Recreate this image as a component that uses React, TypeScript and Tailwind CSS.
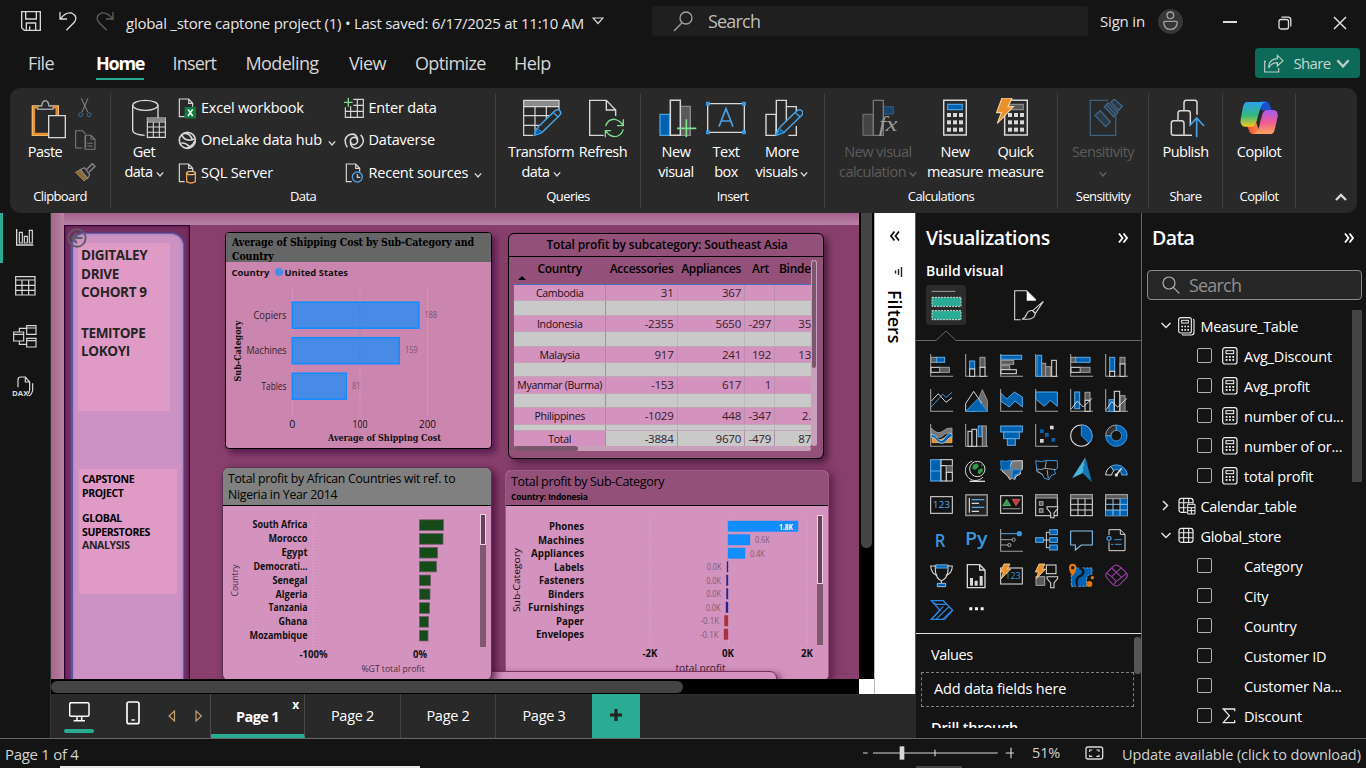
import React from 'react';

type Kids = { children?: React.ReactNode };

/* Icons are drawn on a grid of three units per pixel. */
function Ic({ w, h, children, className = '' }: Kids & { w: number; h: number; className?: string }) {
  return (
    <svg width={w} height={h} viewBox={`0 0 ${w * 3} ${h * 3}`} fill="none" className={`shrink-0 ${className}`}>
      {children}
    </svg>
  );
}

const kinds = {
  b: { fill: '#0063b1', stroke: '#5aa7e6' },
  g: { fill: '#5a5a5a', stroke: '#9c9c9c' },
  o: { fill: '#141414', stroke: '#d8d8d8' },
  n: { fill: 'none', stroke: '#d8d8d8' },
};
function R({ x, y, w, h, k }: { x: number; y: number; w: number; h: number; k: keyof typeof kinds }) {
  return <rect x={x} y={y} width={w} height={h} strokeWidth={3.2} {...kinds[k]} />;
}
const W = '#d8d8d8';
const B = '#3a96dd';
const G = '#a0a0a0';
const Axis = () => <path d="M2 0V67H69" stroke={G} strokeWidth={3.2} />;
const Bolt = () => <path d="M12 0H30L22 15H32L4 44L10 24H1Z" fill="#e8912d" stroke="#f8d49a" strokeWidth={2.5} />;
const Funnel = () => <path d="M36 38H68V44L57 57V71H47V57L36 44Z" fill="#141414" stroke={W} strokeWidth={3.2} />;

const visuals: React.ReactNode[] = [
  <><Axis /><R x={3} y={10} w={17} h={15} k="g" /><R x={20} y={10} w={24} h={15} k="b" /><R x={3} y={40} w={26} h={15} k="o" /><R x={29} y={40} w={29} h={15} k="g" /></>,
  <><Axis /><R x={14} y={21} w={15} h={24} k="b" /><R x={14} y={45} w={15} h={22} k="o" /><R x={45} y={10} w={15} h={30} k="g" /><R x={45} y={40} w={15} h={27} k="o" /></>,
  <><Axis /><R x={3} y={4} w={62} h={12} k="b" /><R x={3} y={19} w={38} h={12} k="g" /><R x={3} y={35} w={26} h={12} k="g" /><R x={3} y={47} w={46} h={12} k="o" /></>,
  <><Axis /><R x={6} y={4} w={14} h={63} k="b" /><R x={20} y={28} w={12} h={39} k="g" /><R x={32} y={38} w={14} h={29} k="g" /><R x={50} y={19} w={14} h={48} k="o" /></>,
  <><Axis /><R x={3} y={10} w={14} h={15} k="g" /><R x={17} y={10} w={43} h={15} k="b" /><R x={3} y={40} w={28} h={15} k="o" /><R x={31} y={40} w={29} h={15} k="g" /></>,
  <><Axis /><R x={14} y={10} w={15} h={42} k="b" /><R x={14} y={52} w={15} h={15} k="o" /><R x={45} y={10} w={15} h={20} k="g" /><R x={45} y={30} w={15} h={37} k="o" /></>,

  <><Axis /><path d="M4 54L38 16L48 25L66 10" stroke={B} strokeWidth={3} /><path d="M4 36L25 14L48 40L66 26" stroke={W} strokeWidth={3} /></>,
  <><path d="M52 2L67 34V67L38 36Z" fill="#6a6a6a" stroke={G} strokeWidth={2.5} /><path d="M2 67V44L26 7L50 42L34 67Z" fill="#141414" stroke={W} strokeWidth={3} /><path d="M2 67L38 30L67 67Z" fill="#0063b1" stroke={B} strokeWidth={3} /></>,
  <><path d="M2 12L20 30L43 9L67 24V54L45 36L28 54L2 36Z" fill="#0063b1" stroke="#5aa7e6" strokeWidth={3} /><Axis /></>,
  <><path d="M2 9H67V52L46 34L28 52L2 30Z" fill="#0063b1" stroke="#5aa7e6" strokeWidth={3} /><Axis /></>,
  <><Axis /><R x={14} y={9} w={15} h={50} k="b" /><R x={45} y={10} w={15} h={24} k="g" /><R x={45} y={34} w={15} h={33} k="o" /><path d="M4 60L22 36L40 54L66 28" stroke={W} strokeWidth={3} /></>,
  <><Axis /><R x={12} y={32} w={15} h={35} k="b" /><R x={28} y={7} w={16} h={60} k="o" /><R x={46} y={20} w={14} h={47} k="g" /><path d="M4 62L20 38L38 54L66 28" stroke={W} strokeWidth={3} /></>,

  <><path d="M6 34L24 50L42 42L66 34V56H6Z" fill="#e8912d" stroke="#f3c078" strokeWidth={2} /><path d="M4 12Q22 34 38 22Q50 10 66 12V28Q48 24 38 36Q22 48 4 28Z" fill="#777" stroke={G} strokeWidth={2.5} /><path d="M4 30Q16 32 24 44Q36 58 48 36Q54 28 66 28V38Q56 40 48 52Q36 64 22 52Q14 38 4 40Z" fill="#0063b1" stroke="#a9d4f5" strokeWidth={2.5} /><Axis /></>,
  <><Axis /><R x={9} y={22} w={12} h={45} k="o" /><R x={21} y={16} w={14} h={51} k="o" /><R x={40} y={6} w={11} h={32} k="b" /><R x={52} y={6} w={12} h={61} k="g" /></>,
  <><R x={2} y={6} w={65} h={18} k="b" /><R x={11} y={24} w={47} h={20} k="b" /><R x={22} y={44} w={24} h={20} k="b" /></>,
  <><Axis /><path d="M45 5h11v11h-11zM15 45h11v11h-11z" fill={W} /><path d="M15 16h11v11h-11zM30 27h11v11h-11zM49 42h11v11h-11z" fill="#0063b1" /></>,
  <><circle cx="34" cy="35" r="32" stroke={W} strokeWidth={3.2} /><path d="M34 3A32 32 0 0 1 57 57L34 35Z" fill="#0063b1" stroke={B} strokeWidth={3} /></>,
  <><circle cx="34" cy="35" r="24" stroke="#0063b1" strokeWidth={16} /><path d="M2 35A32 32 0 0 1 34 3V19A16 16 0 0 0 18 35Z" fill="#333" stroke={G} strokeWidth={3} /><path d="M34 3A32 32 0 1 1 2 35H18A16 16 0 1 0 34 19Z" stroke={B} strokeWidth={3} /></>,

  <><R x={2} y={2} w={31} h={64} k="b" /><path d="M2 36H33" stroke="#5aa7e6" strokeWidth={3} /><R x={33} y={2} w={34} h={18} k="o" /><R x={33} y={20} w={16} h={46} k="o" /><R x={49} y={20} w={18} h={20} k="g" /><R x={49} y={40} w={18} h={26} k="o" /></>,
  <><path d="M22 6A30 30 0 1 0 54 54" stroke={W} strokeWidth={3} /><circle cx="37" cy="30" r="23" stroke={W} strokeWidth={3} fill="#141414" /><path d="M24 17L37 13L42 22L32 32L22 30ZM40 32L52 27L54 36L44 46L38 41ZM48 14L56 20L50 22Z" fill="#2f9b4b" /><path d="M14 67H60" stroke={W} strokeWidth={4} /></>,
  <><path d="M36 6L67 5V30L60 38L62 44L48 52L44 62L36 56L30 62L22 50L6 36L2 30H28Z" fill="#777" stroke={W} strokeWidth={3} /><path d="M2 5L16 7L34 4L30 20L32 32L4 34ZM38 32H62L58 44L44 48L42 62L36 52Z" fill="#0063b1" stroke={B} strokeWidth={2.5} /></>,
  <><path d="M2 5L20 8L34 4L67 5V28L58 34L62 44L48 50L42 62L28 58L22 46L6 38Z" stroke={B} strokeWidth={3} /><path d="M4 30Q20 34 30 28M34 6L30 28L62 32M36 32L40 58M4 34L24 48" stroke={G} strokeWidth={3} /></>,
  <><path d="M46 -5L6 58L38 42Z" fill="#4db5dd" /><path d="M46 -5L66 70L38 42Z" fill="#1478b8" /><path d="M6 58L38 42L46 -5L40 42Z" fill="#2796c8" /></>,
  <><path d="M2 48A33 33 0 0 1 18 22L26 36A18 18 0 0 0 20 48Z" stroke={W} strokeWidth={3} /><path d="M18 22A33 33 0 0 1 67 48H50A16 16 0 0 0 26 34Z" fill="#0063b1" stroke="#5aa7e6" strokeWidth={3} /><path d="M32 50L50 28" stroke={W} strokeWidth={5} /><circle cx="34" cy="48" r="5" fill={W} /></>,

  <><R x={2} y={8} w={65} h={50} k="n" /><text x="34" y="43" fontFamily="Open Sans" fontSize="28" fill="#5aa7e6" textAnchor="middle" textLength="52" lengthAdjust="spacingAndGlyphs">123</text></>,
  <><R x={2} y={2} w={65} h={63} k="g" /><rect x="6" y="6" width="57" height="55" fill="#222" /><path d="M13 12V56" stroke={W} strokeWidth={3.5} /><path d="M20 17H58M20 40H58" stroke="#5aa7e6" strokeWidth={4} /><path d="M20 28H42M20 52H42" stroke={W} strokeWidth={3.5} /></>,
  <><R x={2} y={5} w={65} h={53} k="n" /><path d="M8 35L20 16L32 35Z" fill="#2f9b4b" stroke="#8ad6a0" strokeWidth={1.5} /><path d="M37 16H60L48 35Z" fill="#d13438" stroke="#eb8f91" strokeWidth={1.5} /><path d="M8 44H61" stroke="#777" strokeWidth={4} /></>,
  <><R x={2} y={2} w={65} h={63} k="n" /><R x={2} y={2} w={65} h={10} k="g" /><R x={13} y={23} w={11} h={11} k="g" /><R x={13} y={44} w={11} h={11} k="g" /><Funnel /></>,
  <><R x={2} y={2} w={65} h={63} k="n" /><R x={2} y={2} w={65} h={12} k="g" /><path d="M2 31H67M2 48H67M24 14V65M45 14V65" stroke={W} strokeWidth={3} /></>,
  <><R x={2} y={2} w={65} h={63} k="n" /><R x={2} y={2} w={65} h={12} k="g" /><path d="M45 14H67V65H2V48H45Z" fill="#0063b1" /><path d="M2 31H67M2 48H67M24 14V65M45 14V65" stroke="#8cc3ee" strokeWidth={3} /></>,

  <text x="14" y="54" fontFamily="Open Sans" fontSize="56" fontWeight="600" fill={B} textLength="32" lengthAdjust="spacingAndGlyphs">R</text>,
  <text x="0" y="48" fontFamily="Open Sans" fontSize="56" fontWeight="600" fill={B} textLength="68" lengthAdjust="spacingAndGlyphs">Py</text>,
  <><Axis /><path d="M3 14H58" stroke="#5aa7e6" strokeWidth={3} /><circle cx="58" cy="14" r="8" fill={B} /><path d="M3 32H38M3 48H26" stroke={G} strokeWidth={3} /><circle cx="41" cy="32" r="5" stroke={G} strokeWidth={3} /><circle cx="28" cy="48" r="5" stroke={G} strokeWidth={3} /></>,
  <><path d="M25 33H44M34 10V56M34 10H44M34 56H44" stroke={W} strokeWidth={3} /><R x={2} y={26} w={23} h={14} k="b" /><R x={44} y={2} w={23} h={15} k="b" /><R x={44} y={26} w={23} h={14} k="b" /><R x={44} y={48} w={23} h={15} k="b" /></>,
  <path d="M2 6H67V48H34L16 63V48H2Z" stroke="#8cc3ee" strokeWidth={3.2} />,
  <><path d="M12 18V2H46L60 16V65H12V38M46 2V16H60" stroke={W} strokeWidth={3} /><circle cx="12" cy="28" r="6" stroke={B} strokeWidth={4} fill="#141414" /><path d="M28 32H50M18 46H26M30 46H50" stroke={B} strokeWidth={3} /></>,

  <><path d="M16 6H2Q4 30 22 34M54 6H67Q66 30 47 34M34 50V60" stroke={W} strokeWidth={3.2} /><path d="M16 4H54V20Q52 44 34 50Q18 44 16 20Z" stroke={W} strokeWidth={3.2} /><path d="M18 3H52V12H18Z" fill="#0063b1" stroke="#5aa7e6" strokeWidth={3} /><path d="M22 68V58H47V68Z" fill="#0063b1" stroke="#8cc3ee" strokeWidth={3} /></>,
  <><path d="M7 2H44L60 18V71H7ZM44 2V18H60" stroke={W} strokeWidth={4} /><path d="M15 42h9v23h-9zM29 50h9v15h-9zM44 36h9v29h-9z" fill={W} /></>,
  <><R x={2} y={12} w={65} h={48} k="n" /><text x="16" y="46" fontFamily="Open Sans" fontSize="29" fill={B} textLength="46" lengthAdjust="spacingAndGlyphs">123</text><Bolt /></>,
  <><R x={34} y={3} w={29} h={26} k="n" /><R x={3} y={38} w={26} h={26} k="g" /><Funnel /><Bolt /></>,
  <><path d="M4 12H66V30Q52 30 50 44Q48 54 50 67H4Z" fill="#0063b1" stroke="#5aa7e6" strokeWidth={3} strokeDasharray="8 3" /><path d="M28 10Q50 20 34 34Q14 40 22 68" stroke="#141414" strokeWidth={7} /><path d="M-3 10A11 11 0 0 1 19 10Q19 24 8 36Q-3 24 -3 10Z" fill="#e8760c" /><circle cx="8" cy="11" r="5" fill="#141414" /><circle cx="58" cy="60" r="9" fill="#e8760c" /><circle cx="67" cy="41" r="5" fill="#e8760c" /></>,
  <><path d="M24 8Q34 -1 44 8L64 26Q70 34 64 42L44 62Q34 70 24 62L6 42Q-2 34 6 26Z" stroke="#9b3fa8" strokeWidth={3.2} /><path d="M20 12L50 40M50 10L20 38M20 38L34 52L50 40L64 28M6 28L20 38M34 52L26 62" stroke="#9b3fa8" strokeWidth={3.2} /></>,

  <><path d="M4 5H40L68 34L44 61H4L30 34Z" stroke="#2a86e0" strokeWidth={4} /><path d="M8 10L20 16H48M4 61L40 22M18 61L56 24M38 61L66 34" stroke="#2a86e0" strokeWidth={3.4} /></>,
  <path d="M13 25h9v9h-9zM30 25h9v9h-9zM47 25h9v9h-9z" fill="#f4f4f4" />,
];

function Chev({ s = 8, c = '#d8d8d8' }: { s?: number; c?: string }) {
  return (
    <svg width={s} height={s} viewBox="0 0 10 10" fill="none" className="shrink-0">
      <path d="M1 3L5 7.5L9 3" stroke={c} strokeWidth="1.7" />
    </svg>
  );
}

/* Ribbon */
function Group({ w, label, children }: Kids & { w: string; label: string }) {
  return (
    <div className={`flex h-full flex-col ${w}`}>
      <div className="flex h-[98px] items-start pt-[10px]">{children}</div>
      <div className="h-5 text-center text-[13px] leading-[20px] tracking-[-0.045em] text-white">{label}</div>
    </div>
  );
}
const Sep = () => <div className="mt-[5px] h-[115px] w-px shrink-0 bg-[#404040]" />;
function Big({ w, icon, a, b, chev, dim }: { w: string; icon: React.ReactNode; a: string; b?: string; chev?: boolean; dim?: boolean }) {
  return (
    <div className={`flex shrink-0 flex-col items-center whitespace-nowrap text-[14.5px] leading-[20px] tracking-[-0.035em] ${w} ${dim ? 'text-[#5c5c5c]' : 'text-white'}`}>
      <div className="flex h-11 justify-center">{icon}</div>
      <div>{a}</div>
      <div className="flex h-5 items-center gap-[3px]">{b}{chev && <span className="pt-[3px]"><Chev c={dim ? '#666' : W} /></span>}</div>
    </div>
  );
}
function Small({ icon, text, chev }: { icon: React.ReactNode; text: string; chev?: boolean }) {
  return (
    <div className="flex h-[32.5px] shrink-0 items-center whitespace-nowrap text-[14.5px] tracking-[-0.014em] text-white">
      <span className="w-[23px] shrink-0">{icon}</span>
      <span className="pb-px">{text}</span>
      {chev && <span className="pl-[6px] pt-[4px]"><Chev /></span>}
    </div>
  );
}
const Pencil = () => (
  <>
    <path d="M36 102L46 86L96 38Q106 32 112 40Q116 46 108 54L58 102L34 112Z" fill="#292929" stroke="#4a9fe0" strokeWidth={4.5} />
    <path d="M35 112L42 90L58 104Z" fill="#0063b1" stroke="#4a9fe0" strokeWidth={3} /><path d="M92 44L106 58" stroke="#4a9fe0" strokeWidth={4} />
  </>
);
const Doc = () => <path d="M20 56H4V3H32L44 16V26M32 3V16H44" stroke={W} strokeWidth={3.5} />;
const Calc = ({ c = '#4a9fe0', f = '#0063b1' }) => (
  <>
    <path d="M2 7H70V111H2Z" stroke={W} strokeWidth={4.5} fill="#292929" />
    <path d="M14 19H58V35H14Z" fill={f} stroke={c} strokeWidth={3.5} />
    {[0, 1, 2].map((i) => [0, 1, 2].map((j) => <rect key={`${i}${j}`} x={12 + i * 18} y={45 + j * 22} width={12} height={12} fill={W} />))}
  </>
);

function Ribbon() {
  return (
    <div className="ml-[10px] flex h-[125px] w-[1347px] shrink-0 rounded-[10px] bg-[#292929]">
      <Group w="w-[100px]" label="Clipboard">
        <Big w="w-[50px] ml-[10px]" a="Paste" icon={
          <Ic w={36} h={44} className="ml-[6px] translate-x-px"><path d="M4 24H82V112H4Z" stroke="#f3c078" strokeWidth={4} /><path d="M9 28H77V108H9Z" stroke="#e8912d" strokeWidth={7} /><path d="M20 34V24H32Q34 8 43 8Q52 8 54 24H66V34Z" fill="#292929" stroke={G} strokeWidth={4.5} /><path d="M53 53H103V119H53Z" fill="#292929" stroke={W} strokeWidth={4} /></Ic>} />
        <div className="flex flex-col pl-[5px]">
          <div className="flex h-[32px] w-5 items-start justify-center"><Ic w={14} h={20}><path d="M10 1L29 42M30 1L12 42" stroke="#8a8a8a" strokeWidth={3} /><circle cx="8" cy="50" r="6" stroke="#3f6d94" strokeWidth={3} /><circle cx="33" cy="50" r="6" stroke="#3f6d94" strokeWidth={3} /></Ic></div>
          <div className="h-[33px]"><Ic w={21} h={21}><path d="M22 54H2V2H22L32 12M32 54V16H48L60 28V58H30V16M48 16V28H60M37 40H53M37 48H53" stroke="#7a7a7a" strokeWidth={3.2} /></Ic></div>
          <Ic w={21} h={20}><path d="M2 28L20 18L38 42L28 54Z" fill="#8a6a3a" stroke="#b09468" strokeWidth={3} /><path d="M16 20L28 14L44 34L38 46Z" fill="#292929" stroke="#8a8a8a" strokeWidth={3.5} /><path d="M34 20L52 2L60 10L42 28" stroke="#8a8a8a" strokeWidth={4} /></Ic>
        </div>
      </Group>
      <Sep />
      <Group w="w-[384px]" label="Data">
        <Big w="w-[66px]" a="Get" b="data" chev icon={
          <Ic w={36} h={44} className="ml-[8px] translate-x-[2px]"><ellipse cx="40" cy="22" rx="38" ry="15" stroke={W} strokeWidth={4} /><path d="M2 22V98Q4 110 38 112M78 22V60" stroke={W} strokeWidth={4} /><path d="M46 60H100V118H46Z" fill="#292929" stroke={W} strokeWidth={3.5} /><path d="M46 61H100V70H46Z" fill="#888" /><path d="M46 72H100M46 87H100M46 103H100M64 72V118M82 72V118" stroke={W} strokeWidth={3.2} /></Ic>} />
        <div className="ml-px flex w-[166px] flex-col -mt-[6px]">
          <Small text="Excel workbook" icon={<Ic w={20} h={21}><Doc /><rect x="20" y="27" width="34" height="34" fill="#107c41" /><path d="M30 34L44 54M44 34L30 54" stroke="#fff" strokeWidth={4.5} /></Ic>} />
          <Small text="OneLake data hub" chev icon={<Ic w={18} h={19}><circle cx="28" cy="28" r="24" stroke={W} strokeWidth={5} /><path d="M12 12Q20 34 50 24M16 8Q34 2 44 28M10 36Q28 36 36 50M50 30Q46 44 26 52" stroke={W} strokeWidth={5} /></Ic>} />
          <Small text="SQL Server" icon={<Ic w={20} h={21}><Doc /><path d="M26 30V56Q39 64 52 56V30" fill="#292929" stroke="#f0a04b" strokeWidth={4} /><ellipse cx="39" cy="30" rx="13" ry="5" stroke="#f3c078" strokeWidth={4} fill="#292929" /></Ic>} />
        </div>
        <div className="flex flex-col -mt-[6px] [&_span:first-child]:w-[24.5px]">
          <Small text="Enter data" icon={<Ic w={20} h={20}><path d="M28 4H58V58H4V28M4 40H58M20 24V58M40 4V58M28 22H58" stroke={W} strokeWidth={3.4} /><path d="M13 0V26M0 13H26" stroke="#7ddf8b" strokeWidth={4} /></Ic>} />
          <Small text="Dataverse" icon={<Ic w={20} h={18}><path d="M10 46Q-6 20 16 8Q34 2 40 18Q44 36 30 38Q20 38 20 28M50 8Q68 30 46 46Q26 54 20 36Q16 18 30 16Q40 16 40 26" stroke={W} strokeWidth={4.5} /></Ic>} />
          <Small text="Recent sources" chev icon={<Ic w={22} h={21} className="translate-x-[1px]"><Doc /><circle cx="37" cy="42" r="15" fill="#292929" stroke="#4a9fe0" strokeWidth={4} /><path d="M37 33V43H46" stroke={W} strokeWidth={3.4} /></Ic>} />
        </div>
      </Group>
      <Sep />
      <Group w="w-[144px]" label="Queries">
        <Big w="w-[68px] ml-[11px]" a="Transform" b="data" chev icon={
          <Ic w={40} h={44} className="ml-[4px]"><path d="M3 7H107V24H3Z" fill="#8a8a8a" /><path d="M30 112H2V7H108V40M2 26H108M2 53H80M2 82H52M36 26V98M70 26V70" stroke={W} strokeWidth={3.6} /><Pencil /></Ic>} />
        <Big w="w-[56px]" a="Refresh" icon={
          <Ic w={36} h={44} className="ml-[8px]"><path d="M44 112H2V7H52L80 36V54M52 7V36H80" stroke={W} strokeWidth={4.2} /><path d="M50 84Q58 62 78 64Q94 68 102 82M103 64V83H84M103 94Q96 116 76 116Q60 114 50 98M49 118V98H66" stroke="#7ddf8b" strokeWidth={4} /></Ic>} />
      </Group>
      <Sep />
      <Group w="w-[183px]" label="Insert">
        <Big w="w-[50px] ml-[10px]" a="New" b="visual" icon={
          <Ic w={38} h={44} className="ml-[3px]"><path d="M3 49H33V112H3Z" fill="#0063b1" stroke="#4a9fe0" strokeWidth={4} /><path d="M64 25H94V112H64Z" fill="#5a5a5a" stroke="#8a8a8a" strokeWidth={4} /><path d="M34 7H64V112H34Z" fill="#292929" stroke={W} strokeWidth={4.5} /><path d="M82 64V118M54 91H112" stroke="#7ddf8b" strokeWidth={5} /></Ic>} />
        <Big w="w-[50px]" a="Text" b="box" icon={
          <Ic w={40} h={44}><path d="M5 17H115V103H5Z" stroke={W} strokeWidth={4} /><path d="M0 11h12v12h-12zM108 11h12v12h-12zM0 97h12v12h-12zM108 97h12v12h-12z" fill={B} /><path d="M39 86L60 32L81 86M46 69H74" stroke="#4a9fe0" strokeWidth={5} /></Ic>} />
        <Big w="w-[62px]" a="More" b="visuals" chev icon={
          <Ic w={38} h={44} className="ml-[4px]"><path d="M3 49H33V112H3ZM34 112V7H64V90M64 26H94V40M70 112H94V84" stroke={W} strokeWidth={4.2} /><Pencil /></Ic>} />
      </Group>
      <Sep />
      <Group w="w-[232px]" label="Calculations">
        <Big w="w-[86px] ml-[10px]" dim a="New visual" b="calculation" chev icon={
          <Ic w={36} h={44} className="ml-[4px]"><path d="M3 49H34V112H3Z" fill="#444" stroke="#686868" strokeWidth={4} /><path d="M64 26H94V48H64Z" fill="#1c4568" stroke="#2d5f88" strokeWidth={3} /><path d="M34 7H64V112H34Z" fill="#292929" stroke="#777" strokeWidth={4} /><text x="50" y="100" fontFamily="Liberation Serif" fontStyle="italic" fontSize="66" fill="#9a9a9a" textLength="56" lengthAdjust="spacingAndGlyphs">fx</text></Ic>} />
        <Big w="w-[60px] ml-[4px]" a="New" b="measure" icon={<Ic w={24} h={44}><Calc /></Ic>} />
        <Big w="w-[61px]" a="Quick" b="measure" icon={
          <Ic w={32} h={44} className="-ml-[7px]"><g transform="translate(24 0)"><Calc c="#8a8a8a" f="#5a5a5a" /></g><path d="M18 0H48L36 26H52L4 76L16 44H2Z" fill="#e8912d" stroke="#f8d49a" strokeWidth={3.5} /></Ic>} />
      </Group>
      <Sep />
      <Group w="w-[90px]" label="Sensitivity">
        <Big w="w-[90px]" dim a="Sensitivity" chev icon={
          <Ic w={36} h={44} className="ml-[7px]"><path d="M58 7H4V112H80V54" stroke="#3d5f7c" strokeWidth={4} /><path d="M18 52L34 38L64 72L50 86ZM46 26L58 14L86 44L74 56ZM52 20L80 50M66 12L76 4L100 24L88 38Z" fill="#2c3a46" stroke="#3f6788" strokeWidth={4} /></Ic>} />
      </Group>
      <Sep />
      <Group w="w-[73px]" label="Share">
        <Big w="w-[73px]" a="Publish" icon={
          <Ic w={36} h={44} className="ml-[5px]"><path d="M42 112H10Q4 112 4 106V76Q4 68 11 68H34Q42 68 42 76V112H66M24 66V46Q24 38 31 38H54Q61 38 61 46V80M42 36V14Q42 7 49 7H74Q81 7 81 14V50" stroke={W} strokeWidth={4.5} /><path d="M80 118V62M58 84L80 60L102 84" stroke="#4a9fe0" strokeWidth={5} /></Ic>} />
      </Group>
      <Sep />
      <Group w="w-[72px]" label="Copilot">
        <Big w="w-[72px]" a="Copilot" icon={
          <svg width="40" height="44" viewBox="0 0 120 132">
            <defs>
              <linearGradient id="cl" x1="0" y1="0" x2="0" y2="1"><stop offset="0" stopColor="#2aa0f0" /><stop offset=".55" stopColor="#35b87f" /><stop offset="1" stopColor="#f4c81e" /></linearGradient>
              <linearGradient id="cr" x1="0" y1="0" x2="0" y2="1"><stop offset="0" stopColor="#a35cf0" /><stop offset=".5" stopColor="#ef5a95" /><stop offset="1" stopColor="#fba45a" /></linearGradient>
              <linearGradient id="cb" x1="0" y1="0" x2="1" y2="0"><stop offset="0" stopColor="#ee4d30" /><stop offset="1" stopColor="#ff8a4a" /></linearGradient>
            </defs>
            <path d="M64 10H80Q90 12 94 26L98 36H80Q70 36 66 48L60 62Z" fill="#1a4fd0" />
            <path d="M56 108H40Q32 106 28 92L24 84H40Q50 82 54 70L62 58Z" fill="url(#cb)" />
            <path d="M24 12H80Q68 16 64 32L52 74Q48 86 36 86H16Q2 84 5 64L12 26Q16 12 24 12Z" fill="url(#cl)" />
            <path d="M96 108H44Q56 102 60 88L70 48Q74 36 86 36H104Q118 38 116 56L108 92Q104 108 96 108Z" fill="url(#cr)" />
            <path d="M62 60L69 48Q70 42 72 38L64 32L52 74L56 86Q58 94 60 88Z" fill="#292929" />
          </svg>} />
      </Group>
      <Sep />
      <div className="flex flex-1 items-end justify-end pb-[9px] pr-[9px]">
        <svg width="14" height="14" viewBox="0 0 14 14"><path d="M2 10L7 5L12 10" fill="none" stroke={W} strokeWidth="2.4" /></svg>
      </div>
    </div>
  );
}

/* Report canvas */
function T({ x, y, w, s = 10, b, c = '#111', a = 'end', f = 'Open Sans', r, t }: { x: number; y: number; w?: number; s?: number; b?: boolean; c?: string; a?: 'start' | 'middle' | 'end'; f?: string; r?: boolean; t: string }) {
  return (
    <text x={x} y={y} fontSize={s} fontWeight={b ? 700 : 400} fill={c} textAnchor={a} fontFamily={`${f}, sans-serif`} textLength={w} lengthAdjust="spacingAndGlyphs" transform={r ? `rotate(-90 ${x} ${y})` : undefined}>{t}</text>
  );
}
const Dots = ({ xs, y1, y2 }: { xs: number[]; y1: number; y2: number }) => (
  <>{xs.map((x) => <path key={x} d={`M${x} ${y1}V${y2}`} stroke="#e3bcd6" strokeDasharray="1 2" opacity=".75" />)}</>
);

function ShippingChart() {
  const rows: [string, number, number, string, number][] = [['Copiers', 302, 126.5, '188', 33], ['Machines', 337.5, 107, '159', 40], ['Tables', 373, 54, '81', 25]];
  return (
    <svg width="264" height="186" viewBox="226 262.5 264 186" className="block">
      <T x={231.5} y={276.3} w={38} s={9.6} b a="start" t="Country" />
      <circle cx="279" cy="272.5" r="4" fill="#418fe8" />
      <T x={284.5} y={276.3} w={63.5} s={9.6} b a="start" t="United States" />
      <Dots xs={[292.5, 360, 427.5]} y1={288} y2={417} />
      {rows.map(([n, y, w, v, tw]) => (
        <g key={n}>
          <rect x="292.3" y={y + 0.7} width={w} height="26" fill="#478be6" stroke="#118dff" strokeWidth="1.5" />
          <T x={286.5} y={y + 17.2} w={tw} s={10} c="#33202c" t={n} />
          <T x={292.5 + w + 5.5} y={y + 16.4} w={v.length * 4.2} s={8.5} c="#75586c" a="start" t={v} />
        </g>
      ))}
      <path d="M360 302V364" stroke="#3a7bcf" strokeDasharray="1 2" />
      <T x={292.3} y={428} w={6} s={10} a="middle" t="0" /><T x={360} y={428} w={15} s={10} a="middle" t="100" /><T x={427.5} y={428} w={17} s={10} a="middle" t="200" />
      <T x={384.5} y={441} w={113} s={9.5} b a="middle" f="DejaVu Serif" t="Average of Shipping Cost" />
      <T x={240.5} y={351.5} w={61} s={9.5} b a="middle" f="DejaVu Serif" r t="Sub-Category" />
    </svg>
  );
}

function AfricaChart() {
  const rows: [string, number, number][] = [['South Africa', 24, 55], ['Morocco', 23.5, 39], ['Egypt', 18, 26], ['Democrati...', 17, 54], ['Senegal', 11, 35], ['Algeria', 10.5, 32], ['Tanzania', 10, 39], ['Ghana', 9, 29], ['Mozambique', 8.5, 58]];
  return (
    <svg width="267" height="174" viewBox="223 506 267 174" className="block">
      <Dots xs={[313.5, 420.5]} y1={515} y2={648} />
      {rows.map(([n, w, tw], i) => (
        <g key={n}>
          <rect x="419.5" y={519.8 + i * 13.82} width={w} height="10.6" fill="#154a1a" stroke="#6f5a66" strokeWidth=".8" />
          <T x={307.5} y={528.3 + i * 13.85} w={tw} s={9.8} b t={n} />
        </g>
      ))}
      <T x={313.5} y={658} w={28} s={9.8} b a="middle" t="-100%" /><T x={420} y={658} w={14} s={9.8} b a="middle" t="0%" />
      <T x={393} y={672} w={63} s={9} c="#4b2f42" a="middle" t="%GT total profit" />
      <T x={237.5} y={580.5} w={32} s={9} c="#4b2f42" a="middle" r t="Country" />
      <rect x="480" y="514" width="6" height="133" fill="#7d5a70" /><rect x="480.5" y="514.5" width="5" height="30" fill="#624357" stroke="#f0cfe3" />
    </svg>
  );
}

function SubCategoryChart() {
  const rows: [string, number, number, string, string][] = [['Phones', 35, 70, '1.8K', '#118dff'], ['Machines', 46, 22, '0.6K', '#118dff'], ['Appliances', 53, 17, '0.4K', '#118dff'], ['Labels', 30, -1, '0.0K', '#23238e'], ['Fasteners', 45, -1.5, '0.0K', '#23238e'], ['Binders', 36, -1.5, '0.0K', '#23238e'], ['Furnishings', 56, -2, '0.0K', '#23238e'], ['Paper', 28, -3.5, '-0.1K', '#a5323f'], ['Envelopes', 48, -4, '-0.1K', '#a5323f']];
  return (
    <svg width="322" height="174" viewBox="506 506 322 174" className="block">
      <Dots xs={[650, 728.5, 807]} y1={517} y2={646} />
      {rows.map(([n, tw, v, l, c], i) => {
        const y = 521 + i * 13.5;
        return (
          <g key={n}>
            <rect x={v > 0 ? 728 : 728 + v} y={y} width={Math.abs(v)} height="10.5" fill={c} stroke={c} strokeOpacity=".4" />
            <T x={584} y={y + 9.3} w={tw} s={10} b t={n} />
            {i === 0 ? <T x={793} y={y + 8.5} w={14} s={8.5} b c="#fff" t={l} /> : <T x={v > 0 ? 733 + v : 722.5 + v} y={y + 8.5} w={l.length * 3.7} s={8.5} c="#7d5c72" a={v > 0 ? 'start' : 'end'} t={l} />}
          </g>
        );
      })}
      <T x={650} y={657.3} w={15} s={9.8} b a="middle" t="-2K" /><T x={728} y={657.3} w={12} s={9.8} b a="middle" t="0K" /><T x={807} y={657.3} w={12} s={9.8} b a="middle" t="2K" />
      <T x={700.5} y={672.3} w={50} s={10} c="#3a2333" a="middle" t="total profit" />
      <T x={519.5} y={580} w={64} s={9.8} a="middle" r t="Sub-Category" />
      <rect x="817" y="515" width="6" height="130" fill="#7d5a70" /><rect x="817.5" y="515.5" width="5" height="68" fill="#624357" stroke="#f0cfe3" />
    </svg>
  );
}

function Matrix() {
  const data = [['Cambodia', '31', '367', '', ''], ['Indonesia', '-2355', '5650', '-297', '35'], ['Malaysia', '917', '241', '192', '13'], ['Myanmar (Burma)', '-153', '617', '1', ''], ['Philippines', '-1029', '448', '-347', '2.']];
  const cols = 'grid grid-cols-[91.5px_72px_67.5px_30px_40px]';
  const Row = ({ r, total }: { r: string[]; total?: boolean }) => (
    <div className={`${cols} h-[15.4px] text-[11.5px] leading-[16.4px] tracking-[-0.02em]`}>
      {r.map((v, i) => (
        <div key={i} className={`overflow-hidden whitespace-nowrap ${i === 0 ? 'border-r border-[#6f9be0] bg-[#d492be] pl-px text-center text-[10.5px] font-medium tracking-[-0.025em] text-[#1a0d15]' : 'border-r border-[#b98fab] pr-[3px] text-right text-[#33222d]'} ${i > 0 && total ? 'bg-[#c9c9c9]' : ''} ${i > 0 && !total ? 'bg-[#d492be]' : ''}`}>{v}</div>
      ))}
    </div>
  );
  const Gap = ({ last }: { last?: boolean }) => (
    <div className={`${cols} border-y border-[#bfa5b5] bg-[#c9c9c9] ${last ? 'h-[7px]' : 'h-[15.4px]'}`}>
      {[0, 1, 2, 3, 4].map((i) => <div key={i} className={i === 0 ? 'border-r border-[#6f9be0]' : 'border-r border-[#bdb5ba]'} />)}
    </div>
  );
  return (
    <div className="absolute left-[457px] top-[20px] h-[226px] w-[316px] rounded-[6px] border-[1.5px] border-black bg-[#93517a] shadow-[4px_4px_7px_rgba(30,0,25,0.55)]">
      <div className="flex h-[23px] items-center justify-center border-b-[1.5px] border-black pl-[2px] text-[12px] font-semibold text-black tracking-[-0.013em] whitespace-nowrap">Total profit by subcategory: Southeast Asia</div>
      <div className="flex pl-[5px]">
        <div className="w-[297px] overflow-hidden">
          <div className={`${cols} h-[28px] border-b border-[#4a6fc0] pt-[4px] text-[12px] font-semibold leading-[16px] tracking-[-0.025em] text-black whitespace-nowrap`}>
            <div className="text-center">Country<div className="-mt-[1px] ml-[4px] h-0 w-0 border-x-[4px] border-b-[4px] border-x-transparent border-b-black" /></div>
            <div className="pr-[4px] text-right">Accessories</div><div className="-ml-1 pr-[4px] text-right">Appliances</div><div className="pr-[6px] text-right">Art</div><div className="pl-[4px]">Binders</div>
          </div>
          {data.map((r, i) => <React.Fragment key={r[0]}><Row r={r} /><Gap last={i === 4} /></React.Fragment>)}
          <Row total r={['Total', '-3884', '9670', '-479', '87']} />
          <div className="h-[5px] rounded-full bg-[#c9a0b9]"><div className="h-full w-[64px] rounded-full bg-[#7b566d]" /></div>
        </div>
        <div className="mt-[3px] h-[186px] w-[6px] rounded-full bg-[#c9a0b9]"><div className="h-[109px] rounded-full border border-[#c9a0b9] bg-[#7b566d]" /></div>
      </div>
    </div>
  );
}

function Report() {
  return (
    <div className="relative h-[466px] w-[808px] overflow-hidden bg-[#883f6c]">
      <div className="absolute inset-x-0 top-0 h-[12px] bg-linear-to-b from-[#a4628b] to-[#b880a4]" />
      <div className="absolute bottom-0 left-0 top-0 w-[13px] bg-linear-to-r from-[#a56489] to-[#b984a6]" />
      <div className="absolute left-[13px] top-[12px] h-[470px] w-[126px] border border-[#2e0034] bg-[#742d5e] shadow-[inset_0_0_3px_#4a0a45]">
        <div className="ml-[6px] mt-[7px] h-full w-[113px] rounded-t-[13px] border border-[#6a5fae] border-l-2 border-l-[#5a55a4] bg-[#cc92c4] pl-[5px] pt-[9px] shadow-[0_0_3px_#5050a0,inset_0_0_3px_#8f80c4]">
          <div className="h-[168px] w-[92px] bg-[#e09ac6] pl-[3px] pt-[3px] text-[13.5px] font-bold leading-[18.5px] tracking-[-0.025em] text-[#252525]">
            DIGITALEY<br />DRIVE<br />COHORT 9<div className="h-[22px]" />TEMITOPE<br />LOKOYI
          </div>
          <div className="ml-px mt-[58px] h-[125px] w-[98px] bg-[#e09ac6] pl-[3px] pt-[4px] text-[10.5px] font-bold leading-[13.7px] tracking-[-0.035em] text-black">
            CAPSTONE<br />PROJECT<div className="h-[11.5px]" />GLOBAL<br />SUPERSTORES<br /><span className="text-[#252525]">ANALYSIS</span>
          </div>
        </div>
      </div>
      <svg width="20" height="20" viewBox="0 0 20 20" className="absolute left-[15.5px] top-[14.5px]"><g fill="none" stroke="#625a66" strokeWidth="1.9"><circle cx="10" cy="10" r="8.7" /><path d="M15.5 10H5.5M10 5L5 10L10 15" /></g></svg>

      <div className="absolute left-[174px] top-[19px] w-[267px] overflow-hidden rounded-[4px] border-[1.5px] border-black bg-[#cb86af] shadow-[4px_4px_7px_rgba(50,0,60,0.6)]">
        <div className="h-[28.5px] whitespace-nowrap bg-[#666] pl-[6px] font-['DejaVu_Serif_Condensed','DejaVu_Serif',serif] text-[10.5px] font-bold leading-[14px] tracking-[-0.01em] text-black">
          <div className="pt-[2px]">Average of Shipping Cost by Sub-Category and</div><div>Country</div>
        </div>
        <ShippingChart />
      </div>
      <Matrix />
      <div className="absolute left-[454px] top-[257px] w-[324px] rounded-[6px] border border-[#a05b88] bg-[#d492be] shadow-[4px_2px_8px_rgba(50,0,40,0.5)]">
        <div className="h-[35px] rounded-t-[5px] border-b-[1.5px] border-black bg-[#93517a] pl-[5px] text-black">
          <div className="pt-[2px] text-[12.5px] leading-[17px] tracking-[-0.028em]">Total profit by Sub-Category</div>
          <div className="text-[8.5px] font-bold leading-[13px] tracking-[-0.025em]">Country: Indonesia</div>
        </div>
        <SubCategoryChart />
      </div>
      <div className="absolute left-[430px] top-[458px] h-[30px] w-[296px] rounded-[7px] border-[1.5px] border-[#7a2f60] bg-[#d492be] shadow-[4px_2px_6px_rgba(50,0,40,0.5)]" />
      <div className="absolute left-[171px] top-[254px] w-[270px] overflow-hidden rounded-[7px] border border-[#5b3450] bg-[#d492be] shadow-[4px_3px_8px_rgba(50,0,40,0.7)]">
        <div className="h-[37.5px] whitespace-nowrap border-b-[1.5px] border-black bg-[#808080] pl-[5px] pt-[3px] text-[12.3px] leading-[16px] tracking-[-0.023em] text-black">
          Total profit by African Countries wit ref. to<br />Nigeria in Year 2014
        </div>
        <AfricaChart />
      </div>
    </div>
  );
}

/* Side panes */
const CalcIcon = () => (
  <Ic w={16} h={18}><rect x="2" y="2" width="43" height="49" rx="7" stroke="#eee" strokeWidth={3.6} /><rect x="12" y="11" width="23" height="9" stroke="#eee" strokeWidth={3.2} />
    {[0, 1, 2].map((i) => [0, 1].map((j) => <rect key={`${i}${j}`} x={11 + i * 10} y={27 + j * 9} width={5.5} height={5.5} fill="#eee" />))}</Ic>
);
const GridIcon = ({ calc }: { calc?: boolean }) => (
  <Ic w={18} h={18}><rect x="3" y="4" width="42" height="42" rx="7" stroke="#eee" strokeWidth={3.6} /><path d="M3 17H45M3 32H45M17 4V46M32 4V46" stroke="#eee" strokeWidth={3.2} />
    {calc && <><rect x="26" y="20" width="26" height="32" fill="#141414" /><path d="M29 22H51V51H29ZM29 32H51M29 41H51M40 32V51" stroke="#eee" strokeWidth={3} /></>}</Ic>
);
const TreeHead = ({ open, icon, t }: { open: boolean; icon: React.ReactNode; t: string }) => (
  <div className="flex h-[30px] items-center pl-[18px]">
    <svg width="12" height="12" viewBox="0 0 12 12" fill="none" className="mr-[6px]"><path d={open ? 'M1.5 3L6 7.5L10.5 3' : 'M3 1L7.5 5.5L3 10'} stroke="#e4e4e4" strokeWidth="1.5" /></svg>
    <span className="w-[22.5px]">{icon}</span><span>{t}</span>
  </div>
);
const TreeItem = ({ icon, t }: { icon?: React.ReactNode; t: string }) => (
  <div className="flex h-[30px] items-center pl-[55px]">
    <span className="mb-px h-[15px] w-[15px] rounded-[2px] border border-[#b0b0b0]" />
    <span className="ml-[10px] w-[22px]">{icon}</span><span className="tracking-[-0.014em]">{t}</span>
  </div>
);
const Dbl = ({ flip, c = '#fff' }: { flip?: boolean; c?: string }) => (
  <svg width="10" height="12" viewBox="0 0 10 12" fill="none" className={flip ? 'rotate-180' : ''}><path d="M1 1.5L4.5 6L1 10.5M5.5 1.5L9 6L5.5 10.5" stroke={c} strokeWidth="1.8" /></svg>
);

export default function App() {
  return (
    <div className="flex h-[768px] w-[1366px] flex-col overflow-hidden bg-[#141414] font-['Open_Sans',sans-serif] text-[#e4e4e4]">
      <header className="flex h-[42px] shrink-0 items-center text-[14.5px] tracking-[-0.03em]">
        <Ic w={20} h={20} className="ml-[21px]"><path d="M2 2H58V58H10L2 50ZM14 2V24H46V2M16 58V36H44V58M26 58V46" stroke={W} strokeWidth={4} /></Ic>
        <Ic w={18} h={20} className="ml-[18px]"><path d="M3 3V24H24M4 24Q20 2 38 6Q58 16 46 34L22 58" stroke={W} strokeWidth={4} /></Ic>
        <Ic w={18} h={20} className="ml-[19px]"><path d="M51 3V24H30M50 24Q34 2 16 6Q-4 16 8 34L32 58" stroke="#5f5f5f" strokeWidth={4} /></Ic>
        <div className="ml-[12px] w-[459px] whitespace-nowrap pt-[5px] text-[15px] tracking-[-0.017em]">global _store captone project (1) • Last saved: 6/17/2025 at 11:10 AM</div>
        <svg width="12" height="8" viewBox="0 0 12 8" className="ml-[7px]"><path d="M1 1H11L6 6.5Z" fill="none" stroke={W} strokeWidth="1.2" /></svg>
        <div className="ml-[48px] flex h-[30px] w-[436px] items-center rounded-[3px] bg-[#1f1f1f] pl-[21px] text-[18px] text-[#bdbdbd]">
          <Ic w={21} h={21}><circle cx="39" cy="21" r="18" stroke={G} strokeWidth={4} /><path d="M27 35L3 60" stroke={G} strokeWidth={4} /></Ic>
          <span className="ml-[14px] pt-px tracking-[-0.045em]">Search</span>
        </div>
        <span className="ml-[12px] w-[47px] whitespace-nowrap pt-px text-[15px] tracking-[-0.012em]">Sign in</span>
        <div className="ml-[11px] flex h-[25px] w-[25px] items-center justify-center rounded-full bg-[#363636]"><Ic w={17} h={20}><circle cx="25" cy="13" r="10" stroke={G} strokeWidth={4} /><path d="M5 34Q5 31 9 31H42Q46 31 46 34Q44 55 25 55Q7 55 5 34Z" stroke={G} strokeWidth={4} /></Ic></div>
        <div className="ml-[40px] mt-[2px] h-[1.5px] w-[14px] bg-[#ddd]" />
        <svg width="14" height="14" viewBox="0 0 14 14" fill="none" className="ml-[41px] mt-[3px]" stroke="#ddd" strokeWidth="1.3"><rect x="1" y="3.5" width="9.5" height="9.5" rx="2" /><path d="M3.5 1.2H10Q12.8 1.2 12.8 4V10.5" /></svg>
        <svg width="14" height="14" viewBox="0 0 14 14" className="ml-[41px] mt-[3px]"><path d="M1 1L13 13M13 1L1 13" stroke="#ddd" strokeWidth="1.5" /></svg>
      </header>
      <nav className="flex h-[46px] shrink-0 items-start text-[18px] tracking-[-0.035em] text-[#d6d6d6]">
        <span className="ml-[28px] mt-[7.5px] w-[68px]">File</span>
        <span className="mt-[7.5px] h-[30.5px] w-[48px] whitespace-nowrap border-b-2 border-[#2aab93] font-bold tracking-[-0.07em] text-white">Home</span>
        <span className="ml-[28.5px] mt-[7.5px] w-[73px] tracking-[-0.045em]">Insert</span>
        <span className="mt-[7.5px] w-[103.5px]">Modeling</span>
        <span className="mt-[7.5px] w-[66px]">View</span>
        <span className="mt-[7.5px] w-[99px]">Optimize</span>
        <span className="mt-[7.5px] tracking-[-0.03em]">Help</span>
        <div className="ml-auto mr-[6px] mt-[6px] flex h-[30px] w-[105px] items-center rounded-[4px] bg-[#0c6b58] pl-[9px] text-[15px] text-[#c9d6d2]">
          <Ic w={20} h={19}><path d="M6 22H2V54H44V42M40 4L57 20L40 36V26Q22 26 14 42Q14 16 40 14Z" stroke="#b9ccc6" strokeWidth={3.6} /></Ic>
          <span className="ml-[9.5px] w-[42.5px] tracking-[-0.045em]">Share</span><Chev s={14} c="#b9ccc6" />
        </div>
      </nav>
      <Ribbon />

      <div className="flex h-[525px] shrink-0">
        <aside className="flex w-[51px] shrink-0 flex-col items-center border-r border-[#333]">
          <div className="flex h-[50px] w-full items-center border-l-[3px] border-[#2aab93] pl-[13px] pb-[2px]"><Ic w={18} h={17}><path d="M2 0V48H52" stroke={W} strokeWidth={4} /><path d="M10 10H19V42H10ZM25 22H34V42H25ZM40 4H49V42H40Z" stroke={W} strokeWidth={3.5} /></Ic></div>
          <Ic w={21} h={20} className="mt-[13px]"><path d="M2 2H60V57H2ZM2 12H60M2 28H60M2 43H60M21 12V57M41 12V57" stroke={W} strokeWidth={3.6} /></Ic>
          <Ic w={24} h={23} className="mt-[29px]"><path d="M2 21H32V48H2ZM2 28H32M41 2H69V28H41ZM41 9H69M41 40H69V66H41ZM41 47H69M19 21V10H41M19 48V58H41" stroke={W} strokeWidth={3.4} /></Ic>
          <Ic w={24} h={23} className="-ml-[3px] mt-[28px]"><path d="M18 34V12Q18 3 26 3H40L53 18V40Q52 50 48 54M40 3V18H53M62 22V42Q60 56 50 60" stroke={W} strokeWidth={3.6} /><text x="0" y="60" fontFamily="Open Sans" fontSize="23" fontWeight="700" fill={W} textLength="49" lengthAdjust="spacingAndGlyphs">DAX</text></Ic>
        </aside>
        <div className="flex w-[865px] shrink-0 flex-col">
          <div className="flex h-[481px]">
            <div className="w-[823px] bg-black">
              <div className="flex h-[466px]">
                <Report />
                <div className="flex w-[15px] justify-center"><div className="h-[335px] w-[11px] rounded-b-full bg-[#444]" /></div>
              </div>
              <div className="flex h-[15px] items-center justify-between"><div className="h-[12px] w-[632px] rounded-full bg-[#444]" /><div className="h-full w-[15px] bg-white" /></div>
            </div>
            <div className="flex w-[42px] flex-col items-center border-l border-l-[#bbb] border-r border-r-[#555] bg-white text-black">
              <div className="mt-[17px]"><Dbl flip c="#111" /></div>
              <svg width="12" height="12" viewBox="0 0 12 12" className="ml-[6px] mt-[24px]"><path d="M9.5 1V11M6.5 3V9M3.5 4.5V7.5" stroke="#222" strokeWidth="1.4" /></svg>
              <div className="mt-[12px] text-[17.8px] font-semibold leading-[20px] tracking-[0.005em] [writing-mode:vertical-rl]">Filters</div>
            </div>
          </div>
          <div className="flex h-[44px] items-stretch bg-[#292929] text-[14.5px] tracking-[-0.02em] text-white">
            <div className="flex w-[160px] border-r border-[#4a4a4a]">
              <div className="ml-[13px] flex w-[30px] flex-col items-center pt-[8px]"><Ic w={21} h={21}><path d="M7 2H55Q60 2 60 7V38Q60 43 55 43H7Q2 43 2 38V7Q2 2 7 2ZM24 43V55M38 43V55M14 56H48" stroke="#fff" strokeWidth={4.5} /></Ic><div className="mt-[6px] h-[4px] w-full rounded-full bg-[#2aab93]" /></div>
              <Ic w={14} h={24} className="ml-[32px] mt-[7px]"><rect x="3" y="3" width="36" height="65" rx="6" stroke="#fff" strokeWidth={5} /><path d="M16 57H27" stroke="#fff" strokeWidth={4} /></Ic>
              <svg width="34" height="12" viewBox="0 0 34 12" className="ml-[28px] mt-[16px]" fill="none" strokeWidth="1.2"><path d="M6.5 1V11L1 6Z" stroke="#c8a070" /><path d="M28 1V11L33.5 6Z" stroke="#c8a070" /></svg>
            </div>
            <div className="flex w-[94px] flex-col border-b-4 border-r border-b-[#2aab93] border-r-[#4a4a4a]"><div className="h-[13px] pr-[5px] pt-[4px] text-right text-[12px] font-bold leading-[13px]">x</div><div className="text-center font-bold leading-[20px] tracking-[-0.045em]">Page 1</div></div>
            <div className="flex w-[96px] items-center justify-center border-r border-[#404040]">Page 2</div>
            <div className="flex w-[95px] items-center justify-center border-r border-[#404040]">Page 2</div>
            <div className="flex w-[96px] items-center justify-center">Page 3</div>
            <div className="flex w-[48px] items-center justify-center bg-[#2aab93] pb-[3px]"><svg width="12" height="12" viewBox="0 0 12 12"><path d="M6 0V12M0 6H12" stroke="#222" strokeWidth="3.2" /></svg></div>
          </div>
        </div>

        <section className="flex w-[226px] shrink-0 flex-col border-r border-[#666]">
          <div className="flex h-[50px] items-center justify-between pl-[10px] pr-[13px] text-[19.5px] font-semibold tracking-[-0.02em] text-white">Visualizations<Dbl /></div>
          <div className="h-[22px] pl-[10px] text-[14px] font-semibold leading-[16px] tracking-[0] text-white">Build visual</div>
          <div className="flex h-[42px] pl-[10px]">
            <div className="flex h-[40px] w-[40px] items-center justify-center rounded-[3px] bg-[#2b2b2b]"><Ic w={31} h={32}><path d="M2 7H73" stroke={G} strokeWidth={3} /><rect x="3" y="25" width="87" height="27" fill="#2aab93" stroke={W} strokeWidth={3} strokeDasharray="6 3" /><rect x="3" y="65" width="87" height="27" fill="#2aab93" stroke={W} strokeWidth={3} strokeDasharray="6 3" /></Ic></div>
            <Ic w={31} h={31} className="ml-[48px] mt-[5px]"><path d="M20 89H2V2H38L66 30" stroke={W} strokeWidth={3.2} /><path d="M38 2V32H66Z" fill="#fff" /><path d="M88 34L64 70L56 62Z" stroke={W} strokeWidth={3.2} /><path d="M56 62L64 70Q62 88 38 88H24Q34 84 38 72Q44 60 56 62Z" stroke={W} strokeWidth={3.2} /></Ic>
          </div>
          <svg width="225" height="14" viewBox="0 0 225 14" className="mt-[1px] shrink-0"><path d="M0 12.5H20L30 3L40 12.5H225" fill="none" stroke="#666" /></svg>
          <div className="grid h-[291px] shrink-0 grid-cols-[repeat(6,23px)] content-start gap-x-[12px] gap-y-[11px] pl-[14px] pt-[12px]">
            {visuals.map((v, i) => <Ic key={i} w={23} h={24} className="overflow-visible">{v}</Ic>)}
          </div>
          <div className="flex h-[95px] overflow-hidden border-t border-[#ddd] text-[14.5px] tracking-[-0.03em] text-white">
            <div className="w-[218px] pl-[5px]">
              <div className="pl-[10px] pt-[11px] leading-[20px]">Values</div>
              <div className="mt-[7px] flex h-[35px] w-[213px] items-center border border-dashed border-[#808080] pb-[2px] pl-[12px] tracking-[-0.012em]">Add data fields here</div>
              <div className="mt-[10px] pl-[10px] font-semibold leading-[22px] tracking-[-0.012em]">Drill through</div>
            </div>
            <div className="mt-[3px] h-[37px] w-[7px] rounded-[3px] bg-[#555]" />
          </div>
        </section>

        <section className="flex w-[224px] shrink-0 flex-col">
          <div className="flex h-[50px] items-center justify-between pl-[10px] pr-[12px] text-[19.5px] font-semibold tracking-[-0.03em] text-white">Data<Dbl /></div>
          <div className="ml-[5px] mt-[7px] flex h-[30px] w-[215px] items-center rounded-[4px] border border-[#8a8a8a] bg-[#262626] pl-[14px] text-[18px] tracking-[-0.045em] text-[#8f8f8f]">
            <Ic w={18} h={18}><circle cx="21" cy="21" r="18" stroke="#b0b0b0" strokeWidth={3.6} /><path d="M34 34L52 52" stroke="#b0b0b0" strokeWidth={3.6} /></Ic><span className="ml-[9px]">Search</span>
          </div>
          <div className="flex h-[425px] overflow-hidden pt-[10px] text-[14.5px] tracking-[-0.024em] text-white">
            <div className="w-[210px] whitespace-nowrap pt-[1.4px]">
              <TreeHead open icon={<Ic w={18} h={19}><path d="M12 52Q14 54 18 54H40Q48 54 48 46V12Q48 8 46 6" stroke="#eee" strokeWidth={3.4} /><rect x="2" y="2" width="38" height="46" rx="6" stroke="#eee" strokeWidth={3.4} /><rect x="11" y="10" width="20" height="8" stroke="#eee" strokeWidth={3} /><path d="M10 26h5v5h-5zM19 26h5v5h-5zM28 26h5v5h-5zM10 36h5v5h-5zM19 36h5v5h-5zM28 36h5v5h-5z" fill="#eee" /></Ic>} t="Measure_Table" />
              {['Avg_Discount', 'Avg_profit', 'number of cu...', 'number of or...', 'total profit'].map((t) => <TreeItem key={t} icon={<CalcIcon />} t={t} />)}
              <TreeHead open={false} icon={<GridIcon calc />} t="Calendar_table" />
              <TreeHead open icon={<GridIcon />} t="Global_store" />
              {['Category', 'City', 'Country', 'Customer ID', 'Customer Na...'].map((t) => <TreeItem key={t} t={t} />)}
              <TreeItem icon={<Ic w={15} h={16}><path d="M38 10V3H4L22 23L4 44H38V37" stroke="#eee" strokeWidth={3.8} /></Ic>} t="Discount" />
            </div>
            <div className="h-[172px] w-[10px] bg-[#444]" />
          </div>
        </section>
      </div>

      <footer className="flex h-[30px] shrink-0 flex-col border-t border-[#666] text-[14.5px] tracking-[-0.01em] text-[#d2d2d2]">
        <div className="flex h-[28px] items-center whitespace-nowrap pt-[4px]">
          <span className="ml-[5px] w-[860px] text-[15px] tracking-[-0.02em]">Page 1 of 4</span>
          <Ic w={153} h={16} className="-ml-[4px] -mt-[4px]"><path d="M6 24H20M36 24H410M222 14V34M434 24H466M450 8V40" stroke={W} strokeWidth={3.4} /><rect x="116" y="4" width="14" height="40" fill={W} /></Ic>
          <span className="ml-[18px] w-[54px] -mt-[4px]">51%</span>
          <Ic w={19} h={14} className="-ml-px -mt-[3px]"><rect x="3" y="3" width="50" height="36" rx="6" stroke={W} strokeWidth={4} /><path d="M14 18V12H22M34 12H42V18M42 26V31H34M22 31H14V26" stroke={W} strokeWidth={3.5} /></Ic>
          <span className="ml-[18px] tracking-[-0.007em]">Update available (click to download)</span>
        </div>
        <div className="flex h-[2px]"><div className="ml-[60px] w-[360px] bg-[#e8e8e8]" /><div className="w-[496px]" /><div className="w-[46px] bg-[#444]" /></div>
      </footer>
    </div>
  );
}
